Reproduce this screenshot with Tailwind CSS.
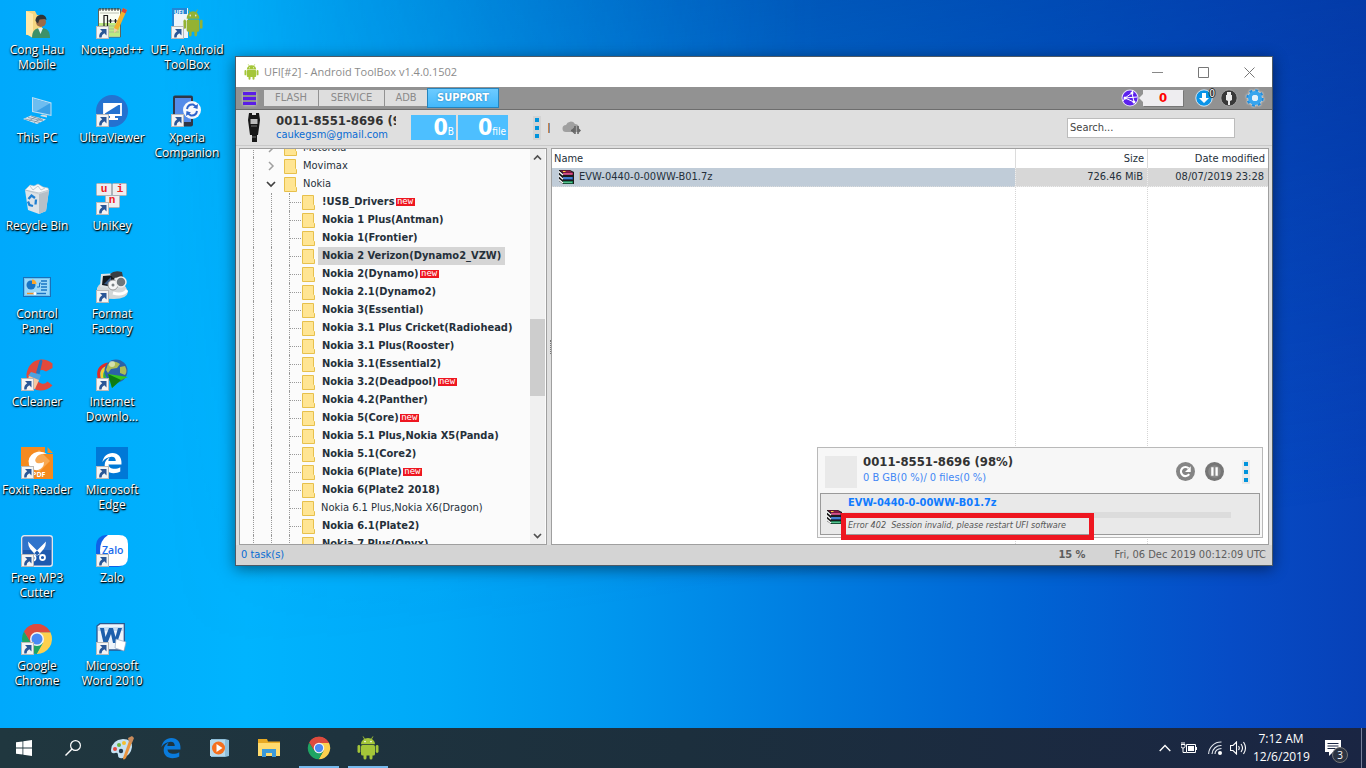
<!DOCTYPE html>
<html lang="en">
<head>
  <meta charset="UTF-8">
  <meta name="viewport" content="width=device-width, initial-scale=1.0">
  <title>UFI - Android ToolBox</title>
  <script src="https://cdn.jsdelivr.net/npm/@tailwindcss/browser@4"></script>
</head>
<body class="flex h-dvh flex-col overflow-hidden font-['Open_Sans','Noto_Sans',sans-serif] text-xs">

  <!-- shared symbols -->
  <svg class="hidden">
    <symbol id="shortcut" viewBox="0 0 32 32">
      <rect x=".5" y="19.500" width="12" height="12" fill="#f4f4f4" stroke="#b9b9b9"/>
      <path d="M4 22h6.500v6.500l-2.200-2.200Q5.600 27.500 5.500 30.500H3.200Q2.800 26.200 6.200 24.200z" fill="#2b5797"/>
    </symbol>
    <symbol id="android" viewBox="0 0 22 24">
      <g fill="#a4c639">
        <path d="M4 8.300a7 6.300 0 0 1 14 0z"/>
        <rect x="4" y="9" width="14" height="10.500" rx="1.500"/>
        <rect x="0.500" y="9" width="2.800" height="8" rx="1.400"/>
        <rect x="18.700" y="9" width="2.800" height="8" rx="1.400"/>
        <rect x="6.500" y="17" width="3" height="6.500" rx="1.500"/>
        <rect x="12.500" y="17" width="3" height="6.500" rx="1.500"/>
      </g>
      <path d="M7.800 3.500 6.300.8M14.200 3.500 15.700.8" stroke="#a4c639" stroke-width=".9" stroke-linecap="round"/>
      <circle cx="8" cy="5.600" r=".8" fill="#fff"/><circle cx="14" cy="5.600" r=".8" fill="#fff"/>
    </symbol>
    <symbol id="chrome" viewBox="0 0 32 32">
      <path d="M16 16 3 8.500A15 15 0 0 1 29 8.500L29.500 9.300H16z" fill="#dd4b3e"/>
      <path d="M16 9.300h13.400A15 15 0 0 1 15.600 31L22 19.500z" fill="#fdd04e"/>
      <path d="M3 8.500A15 15 0 0 0 15.600 31l6.300-11L16 16l-6 3.500z" fill="#1fa463"/>
      <path d="M3 8.500 10 20 10.500 12 16 9.300H29.400L28.800 8.200A15 15 0 0 0 3 8.500z" fill="#dd4b3e"/>
      <circle cx="16" cy="16" r="7" fill="#f5f5f5"/><circle cx="16" cy="16" r="5.500" fill="#4a8af4"/>
    </symbol>
    <symbol id="edge" viewBox="0 0 24 24">
      <path d="M1.500 11C2.500 5 6.800 1 12.400 1 19 1 22.300 5.800 22.300 11v2.700H8.200c.3 3.300 3 4.700 6.300 4.700 2.500 0 4.700-.7 6.500-1.800v4.800c-2.100 1.100-4.500 1.700-7.400 1.700C7.800 23.100 4 19.700 4 14.200c0-4 2.300-6.800 5.500-8.300-1 1.300-1.400 2.600-1.500 4h8.100c0-3-1.500-4.600-4.500-4.600C7.500 5.300 3.800 7.600 1.500 11z"/>
    </symbol>
    <symbol id="archive" viewBox="0 0 17 16">
      <path d="M1 1h11l4 2v12H5L1 12z" fill="#1c1c1c"/>
      <path d="M2 1.500h9.500l3 2H5z" fill="#8d1747"/><path d="M5 3.800h10v2H5.500z" fill="#c12a6a"/><path d="M5 5h9" stroke="#ff8fc0" stroke-width=".7"/>
      <path d="M5 8h10v2.500H5.500z" fill="#1f55b5"/><path d="M5 9h9" stroke="#7dc3ff" stroke-width=".8"/>
      <path d="M5 12.300h10v2.200H5.500z" fill="#12905b"/><path d="M5 13.300h9" stroke="#82e0ad" stroke-width=".8"/>
      <path d="M.8 2.500 5 6M.8 6.500l4.200 3.700M.8 10.500 5 14" stroke="#fff" stroke-width="1.300"/>
      <path d="M5 2.500h2.500" stroke="#ffd43c"/>
    </symbol>
  </svg>

  <main class="relative min-h-0 flex-1 bg-[linear-gradient(90deg,#00a9fc_0%,#00b4fe_18%,#00a9f8_32%,#0096ee_45%,#007ce0_60%,#0064d4_75%,#064cc6_90%,#0741b8_100%)]">
    <div class="absolute inset-0 bg-[linear-gradient(172deg,#00339499_0%,#00339400_75%)] [mask-image:linear-gradient(90deg,transparent_12%,black_60%)]"></div>

    <!-- desktop icons -->
    <nav class="absolute top-[7px] left-0 grid grid-flow-col auto-cols-[75px] grid-rows-[repeat(8,88px)] text-center leading-[15px] text-white [text-shadow:0_1px_2px_#000,1px_1px_1px_#000]">
      <a href="#" class="block pr-px"><svg class="mb-[3px] ml-[21px] size-8" viewBox="0 0 32 32"><path d="M5 4h9l2 4h5v20H5z" fill="#f5d680"/><path d="M5 4l7 3v24l-7-4z" fill="#ffe9a8"/><circle cx="20" cy="15" r="5" fill="#9c6b48"/><path d="M14.500 14c0-8 11-8 11-1l-2-1-5 .5-1.500 4z" fill="#2f3437"/><path d="M11 31c0-8 4-10 9-10s9 2 9 10z" fill="#3d9169"/><path d="M17 21h5l-2.500 6z" fill="#e9f3ef"/></svg>Cong Hau Mobile</a>
      <a href="#" class="block pr-px"><svg class="mb-[3px] ml-[21px] size-8" viewBox="0 0 32 32"><path d="M11 2 30.500 7.500V21L11 17z" fill="#bde0f4"/><path d="M12 3.500 29.500 8.500V19.700L12 16z" fill="#3aa0e6"/><path d="m12 3.500 17 4.800-14 8.300-3-.6z" fill="#6dbdf0"/><path d="m21 19.500 5 1v2l-7-1.500z" fill="#d6dce2"/><path d="M2 24 10 20.500l15 4-9 4.500z" fill="#dbe4ea"/><path d="m4 24 15 3.500M7 22.500 22 26M10 21l12 4M8 26l7-4.500M13 27.500l7-4" stroke="#6d8799" stroke-width=".7"/></svg>This PC</a>
      <a href="#" class="block pr-px"><svg class="mb-[3px] ml-[21px] size-8" viewBox="0 0 32 32"><path d="M4 7 28 7 25 28 18 31 7 27z" fill="#dce3e8"/><path d="m18 10 10-3-3 21-7 3z" fill="#b6c0c8"/><path d="M4 7 9 2l4 1 4-2 5 3 5 1 1 3-10 3z" fill="#f6f8f9" stroke="#b5c0c8" stroke-width=".6"/><path d="m9 3 3 4 5-4 3 4 4-2M4 7l14 3 10-3" stroke="#aab6bf" stroke-width=".7" fill="none"/><path d="m7.500 16 3-3.500 3.500 2.500M7 18.500l1.500 3.500 3.500 1M15 16.500l-.5 5" stroke="#1f7fd1" stroke-width="2.300" fill="none"/></svg>Recycle Bin</a>
      <a href="#" class="block pr-px"><svg class="mb-[3px] ml-[21px] size-8" viewBox="0 0 32 32"><rect x="2.500" y="6.500" width="27" height="19" fill="#6fc3f1" stroke="#1b70b8"/><rect x="4" y="8" width="24" height="16" fill="#9cd8f8"/><circle cx="10" cy="14" r="4.500" fill="#1975c5"/><path d="M11 13V8.500a4.500 4.500 0 0 1 4.500 4.500z" fill="#ffa629"/><path d="M16 16h2.500v-4H20" stroke="#1975c5" fill="none"/><path d="M20 10h6M20 13h6M20 16h6M20 19h6" stroke="#1975c5" stroke-width="1.600"/><path d="M6 22.500h7" stroke="#f29021" stroke-width="1.400"/><path d="M15 22.500h10" stroke="#1975c5" stroke-width="1.400"/><circle cx="14" cy="22.500" r="1.500" fill="#fff"/></svg>Control Panel</a>
      <a href="#" class="block pr-px"><svg class="mb-[3px] ml-[21px] size-8" viewBox="0 0 32 32"><path d="M31.500 9 25 12.500q-7-4-9.500 3-1 7 5 9 3.500 1 6-2l5 4q-7 6.500-16 4.500Q5 27 5.500 15 8 1.500 20 .5q6-.5 11.500 4z" fill="#e2493b"/><path d="M15 14 18.500 2q1.500-2.500 3 0l-3 13z" fill="#2873ba"/><path d="m10 13 10 3-2 5-11-4z" fill="#4da3e0"/><path d="m8 17 10 4-4 9-9-3z" fill="#f6c9a2"/><use href="#shortcut"/></svg>CCleaner</a>
      <a href="#" class="block pr-px whitespace-nowrap"><svg class="mb-[3px] ml-[21px] size-8" viewBox="0 0 32 32"><path d="M0 0h24v7h8v25H0z" fill="#f58a1f"/><path d="M26.500 0 32 6h-5.500z" fill="#f58a1f"/><path d="m18 3 11 11-11 11L7 14z" fill="#f9a953"/><path d="M26 7Q20 3 13 6 6 10 8 18q3 6 9 5 6-2 6-8-4 2-7 1-3-2-1-5 3-5 11-4z" fill="#fff"/><text x="11" y="30" font-size="7" font-weight="700" fill="#fff" style="text-shadow:none">PDF</text><use href="#shortcut"/></svg>Foxit Reader</a>
      <a href="#" class="block pr-px"><svg class="mb-[3px] ml-[21px] size-8" viewBox="0 0 32 32"><rect x=".7" y=".7" width="30.600" height="30.600" rx="2.500" fill="#1d59ae" stroke="#dfe6ee" stroke-width="1.400"/><path d="M2 2h28v13H2z" fill="#2f74cc"/><path d="M7 6.500 19.500 19l-3 1.500Q7 15 7 6.500zM25 6.500 12.500 19l3 1.500Q25 15 25 6.500z" fill="#fff"/><circle cx="12" cy="23" r="2.500" fill="none" stroke="#fff" stroke-width="1.800"/><circle cx="21.500" cy="22.500" r="2.500" fill="none" stroke="#fff" stroke-width="1.800"/><use href="#shortcut"/></svg>Free MP3 Cutter</a>
      <a href="#" class="block pr-px"><svg class="mb-[3px] ml-[21px] size-8" viewBox="0 0 32 32"><use href="#chrome"/><use href="#shortcut"/></svg>Google Chrome</a>

      <a href="#" class="block pr-px whitespace-nowrap"><svg class="mb-[3px] ml-[21px] size-8" viewBox="0 0 32 32"><path d="M2.500 2h22v28h-22z" fill="#fbfff4" stroke="#5e645a"/><path d="M3 16h21v13.500H3z" fill="#bdea83"/><path d="M4 6h19M4 19h19M4 22h19M4 25h19" stroke="#a1a89a" stroke-width=".7"/><path d="M4 1v3M7 1v3M10 1v3M13 1v3M16 1v3M19 1v3M22 1v3" stroke="#333"/><path d="M8 19V8.500h3.500V19M12.500 14h4M14.500 12v4M17.500 14h4M19.500 12v4" stroke="#1d1d1d" stroke-width="1.200" fill="none"/><path d="m27 1 4 2-9 20-4 3v-5z" fill="#f1b22e"/><path d="m27 1 4 2-1.500 3.500-4-2z" fill="#d8473b"/><path d="m18 21 4 2-4 3z" fill="#e9cfa6"/><use href="#shortcut"/></svg>Notepad++</a>
      <a href="#" class="block pr-px"><svg class="mb-[3px] ml-[21px] size-8" viewBox="0 0 32 32"><circle cx="16" cy="16" r="16" fill="#2472d0"/><path d="M8 9h17v11H8z" fill="#2472d0" stroke="#fff" stroke-width="1.800"/><path d="M8 19 24 9H8z" fill="#fff"/><path d="M14 20h5v3h3v2H11v-2h3z" fill="#fff"/><use href="#shortcut"/></svg>UltraViewer</a>
      <a href="#" class="block pr-px"><svg class="mb-[3px] ml-[21px] size-8" viewBox="0 0 32 32"><g fill="#eeeef0" stroke="#aeb2b8"><rect x=".5" y=".5" width="15" height="12" rx="1"/><rect x="16.500" y=".5" width="14" height="12" rx="1"/><rect x="9.500" y="12.500" width="14" height="12" rx="1"/></g><g font-family="Liberation Mono" font-weight="700" font-size="11" text-anchor="middle" fill="#ed2024" style="text-shadow:none"><text x="8" y="9">u</text><text x="24" y="9">i</text><text x="16" y="20">n</text></g><use href="#shortcut"/></svg>UniKey</a>
      <a href="#" class="block pr-px"><svg class="mb-[3px] ml-[21px] size-8" viewBox="0 0 32 32"><path d="M1 17q3-7 15-8 13 1 16 12-1 7-14 7-14 0-17-5z" fill="#d3d7d8"/><path d="m5 3 20-1-3 16-18-2z" fill="#dde3e6"/><path d="m7 5 12-1-2 12-11-2z" fill="#12181e"/><path d="m8 13 7-7v8z" fill="#395b88"/><path d="M14 3q4-4 12-2l1 5-10 1z" fill="#3a3e42"/><circle cx="17" cy="14" r="5" fill="#f5f6f6" stroke="#999"/><circle cx="25" cy="11" r="5" fill="#6f777b" stroke="#eceeee" stroke-width="1.500"/><circle cx="17" cy="14" r="1.500" fill="#7e8486"/><path d="M17 22q10 3 14-3" stroke="#fff" stroke-width="3" fill="none"/><use href="#shortcut"/></svg>Format Factory</a>
      <a href="#" class="block pr-px"><svg class="mb-[3px] ml-[21px] size-8" viewBox="0 0 32 32"><path d="M4 22Q-1 8 12 5" stroke="#e22d24" stroke-width="3" fill="none"/><path d="M7 21Q3 10 13 8" stroke="#f7cf2e" stroke-width="3" fill="none"/><path d="M9 21q-2-8 5-11" stroke="#36ae3a" stroke-width="2.500" fill="none"/><circle cx="20" cy="12" r="11.500" fill="#2c62a8"/><path d="M12 5q6-5 12 0l-3 4-6 1-3 4-2-3zM24 8l5-1q3 6 0 9l-5-2z" fill="#aebc56"/><circle cx="16" cy="5" r="3" fill="#e7efd0" opacity=".7"/><path d="m12 15 20 3-7 3-9 8z" fill="#35c81d"/><path d="m12 15 13 6-9 8z" fill="#0d7b14"/><use href="#shortcut"/></svg>Internet Downlo...</a>
      <a href="#" class="block pr-px"><svg class="mb-[3px] ml-[21px] size-8" viewBox="0 0 32 32"><path d="M0 0h32v32H0z" fill="#0078d7"/><svg x="5" y="5" width="22" height="22" fill="#fff"><use href="#edge"/></svg><use href="#shortcut"/></svg>Microsoft Edge</a>
      <a href="#" class="block pr-px"><svg class="mb-[3px] ml-[21px] size-8" viewBox="0 0 32 32"><rect width="32" height="32" rx="10" fill="#0f62e8"/><path d="M12 0h11q9 0 9 9v13q0 9-9 9H12q-8-4-8-15T12 0z" fill="#fff"/><text x="6" y="19" font-size="10.500" font-weight="600" fill="#1769ed" style="text-shadow:none">Zalo</text><use href="#shortcut"/></svg>Zalo</a>
      <a href="#" class="block pr-px"><svg class="mb-[3px] ml-[21px] size-8" viewBox="0 0 32 32"><path d="M1 3 4 .7h24.300V27H1z" fill="#edf4fc" stroke="#2c578f" stroke-width="1.300"/><path d="M2 4h25v4H2z" fill="#c7ddf4"/><path d="m4 5 3.500 15h4L15 11l2 9h4L26 5h-4l-2.500 9L17 5h-4L9.500 14 8 5z" fill="#1d5fac"/><path d="m20 16 10 3-2 9-9-3z" fill="#fff" stroke="#90a7c4" stroke-width=".7"/><use href="#shortcut"/></svg>Microsoft Word 2010</a>

      <a href="#" class="block pr-px"><svg class="mb-[3px] ml-[21px] size-8" viewBox="0 0 32 32"><path d="M1 1h16v30H1z" fill="#eef4fb"/><path d="M1 1h15v6H1z" fill="#2386d5"/><path d="M1 7h2v24H1z" fill="#2386d5"/><text x="3" y="6.500" font-size="6" font-weight="700" fill="#fff" style="text-shadow:none">UFI</text><svg x="12" y="2" width="20" height="28" viewBox="0 0 22 24" preserveAspectRatio="none" class="brightness-90"><use href="#android"/></svg><use href="#shortcut"/></svg>UFI - Android ToolBox</a>
      <a href="#" class="block pr-px"><svg class="mb-[3px] ml-[21px] size-8" viewBox="0 0 32 32"><rect x="2" y=".5" width="20" height="31" rx="2" fill="#303746"/><rect x="4" y="3" width="16" height="24" fill="#548be9"/><circle cx="21" cy="15" r="9" fill="#f6f8fc"/><path d="M16 14q1-5 6-4.500l3 2M26 16q-1 5-6 4.500l-3-2" stroke="#2e64cc" stroke-width="2" fill="none"/><path d="m27 9-.5 5-4.500-1.500zM15 21l.5-5 4.500 1.500z" fill="#2e64cc"/><use href="#shortcut"/></svg>Xperia Companion</a>
    </nav>

    <!-- ToolBox window -->
    <section class="absolute top-14 right-[93px] bottom-[162px] left-[235px] flex flex-col border border-[#4d5a66] bg-[#dfdfdf] font-['DejaVu_Sans_Condensed','DejaVu_Sans',sans-serif] text-[11px] leading-[14px] text-[#25303a] shadow-[0_3px_14px_#0007]">
      <header class="flex h-[30px] shrink-0 items-center bg-white pl-2">
        <svg class="h-4 w-[15px]"><use href="#android"/></svg>
        <h1 class="ml-[5px] flex-1 font-['Open_Sans',sans-serif] text-[11px] text-[#8b8b8b]">UFI[#2] - Android ToolBox v1.4.0.1502</h1>
        <button aria-label="Minimize" class="grid h-full w-[46px] place-items-center"><svg class="size-[11px]" viewBox="0 0 11 11"><path d="M0 5.500h11" stroke="#888"/></svg></button>
        <button aria-label="Maximize" class="grid h-full w-[46px] place-items-center"><svg class="size-[11px]" viewBox="0 0 11 11"><path d="M.5.5h10v10H.5z" stroke="#777" fill="none"/></svg></button>
        <button aria-label="Close" class="grid h-full w-[46px] place-items-center"><svg class="size-[11px]" viewBox="0 0 11 11"><path d="m.5.500 10 10m0-10-10 10" stroke="#777"/></svg></button>
      </header>

      <nav class="flex h-[23px] shrink-0 items-center border-b border-[#6d6d6d] bg-[#929292] px-[7px]">
        <button aria-label="Menu" class="mr-2 flex h-[13px] w-[13px] flex-col justify-between shadow-[0_0_3px_#ddd]"><span class="h-[3px] w-full bg-[#5a1de6]"></span><span class="h-[3px] w-full bg-[#5a1de6]"></span><span class="h-[3px] w-full bg-[#5a1de6]"></span></button>
        <button class="h-4 w-[54px] bg-[#dedede] text-[#8a8a8a]">FLASH</button>
        <button class="ml-px h-4 w-[65px] bg-[#dedede] text-[#8a8a8a]">SERVICE</button>
        <button class="ml-px h-4 w-[42px] bg-[#dedede] text-[#8a8a8a]">ADB</button>
        <button class="h-5 w-[72px] border border-[#2584bd] bg-linear-to-b from-[#6dcbff] to-[#42b8fb] font-bold text-white [text-shadow:0_0_2px_#1b78b0]">SUPPORT</button>
        <div class="ml-auto flex items-center">
          <svg class="size-[18px]" viewBox="0 0 18 18"><circle cx="9" cy="9" r="8.500" fill="#e7e0fa"/><circle cx="9" cy="9" r="7.500" fill="#5c20ee"/><path d="m4 9 7-5 2 9zM4 9l12-1M4 9l-2 3m9-8 1-3m1 12 2 2" stroke="#fff" fill="none"/><circle cx="4" cy="9" r="1.500" fill="#fff"/><circle cx="11" cy="4" r="1.500" fill="#fff"/><circle cx="13" cy="13" r="1.500" fill="#fff"/></svg>
          <span class="border-4 border-l-0 border-transparent border-r-[#eeedf0]"></span>
          <output class="mr-3 h-4 w-10 bg-[#eeedf0] text-center text-[13px] leading-4 font-bold text-[#f00] shadow-[1px_1px_0_#777]">0</output>
          <button aria-label="Downloads" class="relative size-[18px]"><svg class="size-[18px]" viewBox="0 0 18 18"><circle cx="9" cy="9" r="8.200" fill="#0a94e8" stroke="#d7e4ee"/><path d="M7 4h4v5h3l-5 5-5-5h3z" fill="#fff"/></svg><span class="absolute top-0 right-[-2px] text-[10px] leading-[10px] text-white [text-shadow:1px_0_0_#222,-1px_0_0_#222,0_1px_0_#222,0_-1px_0_#222]">0</span></button>
          <button aria-label="Device" class="ml-[7px] size-[18px]"><svg class="size-[18px]" viewBox="0 0 18 18"><circle cx="9" cy="9" r="8.200" fill="#383838" stroke="#a5a5a5"/><path d="M7 3h4v3h1v5l-2 1v4H8v-4l-2-1V6h1z" fill="#ececec"/></svg></button>
          <button aria-label="Settings" class="ml-[7px] size-5"><svg class="size-5 drop-shadow-[0_0_1px_#fff]" viewBox="0 0 20 20"><circle cx="10" cy="10" r="7" fill="none" stroke="#238ddb" stroke-width="3.500" stroke-dasharray="2.750 2.750"/><circle cx="10" cy="10" r="5" fill="none" stroke="#38a5ee" stroke-width="4"/><circle cx="10" cy="10" r="3" fill="#e4f1fb"/></svg></button>
        </div>
      </nav>

      <div class="flex h-9 shrink-0 items-center border-b border-[#c9c9c9] pr-[37px] pl-3">
        <svg class="h-[29px] w-3" viewBox="0 0 12 29"><path d="M1 0h3v2h4V0h3l1 7-2 15H9v7H4v-7H2L0 7z" fill="#171717"/><path d="M2.500 6h7v5h-7z" fill="#bbb"/><path d="M3 13h6M4 24h4" stroke="#777"/></svg>
        <div class="ml-4 w-[120px] overflow-hidden whitespace-nowrap">
          <p class="text-[13px] leading-[15px] font-bold text-[#333]">0011-8551-8696 (98%)</p>
          <a href="#" class="block text-[#086bd3]">caukegsm@gmail.com</a>
        </div>
        <p class="ml-[15px] flex h-[25px] w-[45px] items-baseline justify-end bg-[#4dbfff] pr-0.5 leading-[25px] text-white"><b class="text-[23px]">0</b><span class="text-[10px]">B</span></p>
        <p class="ml-0.5 flex h-[25px] w-[50px] items-baseline justify-end bg-[#4dbfff] pr-0.5 leading-[25px] text-white"><b class="text-[23px]">0</b><span class="text-[10px]">file</span></p>
        <button aria-label="More" class="ml-[25px] flex h-6 w-2 flex-col items-center justify-between bg-[#d3d3d3] py-0.5"><i class="size-1 bg-[#0093dc]"></i><i class="size-1 bg-[#0093dc]"></i><i class="size-1 bg-[#0093dc]"></i></button>
        <i class="ml-[7px] h-2.5 w-0.5 border-r border-[#7a8fae] bg-[#c98246]"></i>
        <svg class="ml-3 h-4 w-5" viewBox="0 0 20 16"><path d="M4 12a3.500 3.500 0 0 1 0-7A5 5 0 0 1 13 4q3 0 4 3v5z" fill="#a0a0a0"/><path d="M9 10.500h3M13 6v8M16 6v8" stroke="#555" stroke-width="1.300"/><path d="M12.500 7 9 10.500l3.500 3.500zM16.500 8 19 10.500 16.500 13z" fill="#666"/></svg>
        <input type="text" aria-label="Search" placeholder="Search..." class="ml-auto h-5 w-[168px] border border-[#bcbcbc] bg-white px-0.5 placeholder:text-[#444]">
      </div>

      <div class="flex min-h-0 flex-1 px-[3px] pt-0.5">
        <!-- folder tree -->
        <div class="flex w-[308px] shrink-0 border border-[#9f9f9f] bg-[#fbfbfb]">
          <div class="min-w-0 flex-1 overflow-hidden">
            <ul id="tree" class="-mt-2.5 pl-[13px] whitespace-nowrap"></ul>
          </div>
          <div class="mr-px flex w-[15px] flex-col items-center bg-[#f0f0f0] py-1">
            <svg class="size-[9px]" viewBox="0 0 9 9"><path d="M1 6.500 4.500 3 8 6.500" stroke="#505050" stroke-width="1.700" fill="none"/></svg>
            <span class="mt-[157px] h-[77px] w-full bg-[#cdcdcd]"></span>
            <svg class="mt-auto size-[9px]" viewBox="0 0 9 9"><path d="M1 3 4.500 6.500 8 3" stroke="#505050" stroke-width="1.700" fill="none"/></svg>
          </div>
        </div>
        <div class="flex w-1 shrink-0 items-center justify-end"><span class="h-3.5 border-l border-dotted border-[#777]"></span></div>

        <!-- file list -->
        <div class="relative min-w-0 flex-1 border border-[#9f9f9f] bg-white">
          <table class="h-full w-full table-fixed border-separate border-spacing-0">
            <thead>
              <tr class="h-[19px]">
                <th class="px-0.5 text-left font-normal">Name</th>
                <th class="w-[132px] border-l border-[#dcdcdc] px-[3px] text-right font-normal">Size</th>
                <th class="w-[121px] border-l border-[#dcdcdc] px-[3px] text-right font-normal">Date modified</th>
              </tr>
            </thead>
            <tbody>
              <tr class="h-[19px] bg-[#d7d7d7]">
                <td class="border-b border-dotted border-[#ddd] bg-[#c0ccd8] pl-1.5"><span class="flex items-center"><svg class="mr-1 h-4 w-[17px]"><use href="#archive"/></svg>EVW-0440-0-00WW-B01.7z</span></td>
                <td class="border-b border-l border-dotted border-[#eee] px-1 text-right">726.46 MiB</td>
                <td class="border-b border-l border-dotted border-[#eee] px-1 text-right">08/07/2019 23:28</td>
              </tr>
              <tr>
                <td></td>
                <td class="border-l border-dotted border-[#d5d5d5]"></td>
                <td class="border-l border-dotted border-[#d5d5d5]"></td>
              </tr>
            </tbody>
          </table>

          <!-- download panel -->
          <aside class="absolute right-[5px] bottom-1.5 w-[446px] border border-[#b9b9b9] bg-[#f7f7f7] p-0.5">
            <div class="flex h-[43px] items-center pr-2.5 pl-[5px]">
              <span class="size-8 bg-[#e9e9e9]"></span>
              <div class="ml-1.5 flex-1 pb-1">
                <p class="text-[13px] leading-4 font-bold text-[#333]">0011-8551-8696 (98%)</p>
                <p class="leading-4 text-[#4387f5]">0 B GB(0 %)/ 0 files(0 %)</p>
              </div>
              <button aria-label="Retry"><svg class="size-[19px]" viewBox="0 0 18 18"><circle cx="9" cy="9" r="9" fill="#858585"/><path d="M12.500 11.500A4.300 4.300 0 1 1 12 6" stroke="#fff" stroke-width="2" fill="none"/><path d="M14 4v5.500H8.500z" fill="#fff"/></svg></button>
              <button aria-label="Pause" class="ml-2.5"><svg class="size-[19px]" viewBox="0 0 18 18"><circle cx="9" cy="9" r="9" fill="#767676"/><circle cx="9" cy="9" r="6" fill="#8a8a8a"/><path d="M7 5v8m4-8v8" stroke="#fff" stroke-width="2.200"/></svg></button>
              <button aria-label="More" class="ml-[18px] flex h-6 w-2 flex-col items-center justify-between bg-[#e9e9e9] py-0.5"><i class="size-1 bg-[#0093dc]"></i><i class="size-1 bg-[#0093dc]"></i><i class="size-1 bg-[#0093dc]"></i></button>
            </div>
            <div class="relative flex h-[42px] items-center border border-[#9a9a9a] bg-[#e9e9e9] pr-7 pl-[5px]">
              <svg class="mt-1.5 h-4 w-[17px] shrink-0"><use href="#archive"/></svg>
              <div class="ml-px flex-1">
                <p class="ml-1 h-4 font-bold text-[#107bff]">EVW-0440-0-00WW-B01.7z</p>
                <div class="h-1.5 bg-[#dcdcdc]"></div>
                <p class="ml-1 text-[9px] text-[#555] italic">Error 402&nbsp; Session invalid, please restart UFI software</p>
              </div>
              <span class="absolute top-[19px] left-5 h-[27px] w-[253px] border-5 border-[#ee1620]"></span>
            </div>
          </aside>
        </div>
      </div>

      <footer class="flex h-5 shrink-0 items-center bg-[#d4d4d4] pr-1.5 pl-[5px] text-[#5d5d5d]">
        <span class="flex-1 text-[#086bd3]">0 task(s)</span>
        <b class="mr-[29px]">15 %</b>
        <span>Fri, 06 Dec 2019 00:12:09 UTC</span>
      </footer>
    </section>
  </main>

  <!-- taskbar -->
  <footer class="flex h-10 shrink-0 bg-linear-to-r from-[#20373f] via-[#1c2f3d] to-[#1a2543] text-white">
    <div class="flex gap-px">
      <button aria-label="Start" class="grid w-12 place-items-center"><svg class="size-4" viewBox="0 0 16 16"><path d="M0 2.300 6.500 1.400v6.200H0zM7.300 1.300 16 0v7.600H7.300zM0 8.400h6.500v6.200L0 13.700zM7.300 8.400H16V16l-8.700-1.300z" fill="#fff"/></svg></button>
      <button aria-label="Search" class="grid w-12 place-items-center"><svg class="size-4" viewBox="0 0 16 16"><circle cx="10.500" cy="5.500" r="4.900" stroke="#fff" stroke-width="1.200" fill="none"/><path d="M7 9 .5 15.500" stroke="#fff" stroke-width="1.400"/></svg></button>
      <button aria-label="Paint" class="grid w-12 place-items-center"><svg class="size-6" viewBox="0 0 24 24"><path d="M1 14Q2 4 13 3q9 0 9 8-1 8-9 11-5 1-5-3 0-3-3-2-4 1-4-3z" fill="#c6e1f2"/><circle cx="5" cy="13" r="2" fill="#e34a3f"/><circle cx="9" cy="9" r="2" fill="#6ab541"/><circle cx="14" cy="7" r="2" fill="#f5bf2e"/><circle cx="11" cy="15" r="2.200" fill="#23384b"/><path d="m19 5 3 1-6 16q-3 3-3 0z" fill="#e99440"/><path d="m18 2 4-2 2 2-2 5-3-1z" fill="#c98b5c"/></svg></button>
      <button aria-label="Edge" class="grid w-12 place-items-center"><svg class="size-[22px]" fill="#0a7bdc"><use href="#edge"/></svg></button>
      <button aria-label="Media Player" class="grid w-12 place-items-center"><svg class="size-5" viewBox="0 0 20 20"><path d="M1 1h14l4 1v16l-4 1H1z" fill="#8fbfdb"/><path d="M0 2h15v16H0z" fill="#b7d9eb"/><circle cx="8.500" cy="10" r="6.500" fill="#f5701f"/><path d="m6.500 6 6 4-6 4z" fill="#fff"/></svg></button>
      <button aria-label="File Explorer" class="grid w-12 place-items-center"><svg class="h-[18px] w-[22px]" viewBox="0 0 22 18"><path d="M0 0h9l1 2.500h12V17H0z" fill="#e8a922"/><path d="M0 4h22v13H0z" fill="#ffdb6e"/><path d="M4 10h14v8h-4v-4H8v4H4z" fill="#3b9ad9"/></svg></button>
      <button aria-label="Chrome" class="ml-px grid w-12 place-items-center bg-[linear-gradient(#76b9ed,#76b9ed)] bg-[size:40px_2px] bg-bottom bg-no-repeat"><svg class="size-6"><use href="#chrome"/></svg></button>
      <button aria-label="Android ToolBox" class="grid w-12 place-items-center bg-[linear-gradient(#76b9ed,#76b9ed)] bg-[size:40px_2px] bg-bottom bg-no-repeat"><svg class="h-6 w-[22px]"><use href="#android"/></svg></button>
    </div>
    <div class="ml-auto flex items-center">
      <svg class="h-2 w-3" viewBox="0 0 12 8"><path d="M.7 7 6 1.500 11.300 7" stroke="#fff" stroke-width="1.300" fill="none"/></svg>
      <svg class="ml-2.5 h-3 w-4" viewBox="0 0 16 12"><path d="M0 2.500h4v2Q4 6 2 6T0 4.500zM1 0v3M3 0v3M2 6v4.500h3" stroke="#fff" fill="none"/><path d="M5.500 2.500h9v8h-9z" stroke="#fff" fill="none"/><path d="M7 4h6v5H7zM15 5h1v3h-1z" fill="#fff"/></svg>
      <svg class="ml-[11px] size-3.5" viewBox="0 0 14 14"><path d="M.6 13A12.400 12.400 0 0 1 13.500 1M4 13A9 9 0 0 1 13.500 4.500M7 13q0-5 6.500-5.500" stroke="#e4e8ee" stroke-width="1.100" fill="none"/><circle cx="12" cy="12" r="2" fill="#fff"/></svg>
      <svg class="ml-2 h-3.5 w-[17px]" viewBox="0 0 17 14"><path d="M.5 4.500H3L6.500 1v12L3 9.500H.5zM8.500 5q1.500 2 0 4M11 3q3 4 0 8M13.500 1q4 6 0 12" stroke="#fff" stroke-width="1.100" fill="none"/></svg>
      <time class="ml-1.5 w-14 text-center leading-[18px]">7:12 AM<br>12/6/2019</time>
      <button aria-label="Notifications" class="relative ml-4 size-4"><svg class="size-4" viewBox="0 0 16 16"><path d="M0 0h16v12H8l-4 4v-4H0z" fill="#fff"/><path d="M2.500 3.500h11M2.500 6h11M2.500 8.500h8" stroke="#1a2745"/></svg><span class="absolute top-[7px] left-[7px] size-4 rounded-full border border-[#777] bg-[#2c3442] text-[10px] leading-[14px]">3</span></button>
      <span class="mr-1 ml-5 h-10 border-l border-[#77809a]"></span>
    </div>
  </footer>

  <script>
    const models = [
      ["!USB_Drivers", "new"], ["Nokia 1 Plus(Antman)"], ["Nokia 1(Frontier)"],
      ["Nokia 2 Verizon(Dynamo2_VZW)", "selected"], ["Nokia 2(Dynamo)", "new"],
      ["Nokia 2.1(Dynamo2)"], ["Nokia 3(Essential)"], ["Nokia 3.1 Plus Cricket(Radiohead)"],
      ["Nokia 3.1 Plus(Rooster)"], ["Nokia 3.1(Essential2)"], ["Nokia 3.2(Deadpool)", "new"],
      ["Nokia 4.2(Panther)"], ["Nokia 5(Core)", "new"], ["Nokia 5.1 Plus,Nokia X5(Panda)"],
      ["Nokia 5.1(Core2)"], ["Nokia 6(Plate)", "new"], ["Nokia 6(Plate2 2018)"],
      ["Nokia 6.1 Plus,Nokia X6(Dragon)", "read"], ["Nokia 6.1(Plate2)"], ["Nokia 7 Plus(Onyx)"],
    ]
    const folder = `<svg class="h-[15px] w-[13px] shrink-0" viewBox="0 0 13 15"><path d="M.5.5h11v9l1 1v4H.5z" fill="#ffe593" stroke="#e7c04b"/></svg>`
    const badge = `<span class="ml-px h-2 w-[19px] bg-[#ee1620] text-center font-['DejaVu_Sans_Mono',monospace] text-[9px] leading-[6px] text-white">new</span>`

    const brand = (name, open) => `
      <li class="flex h-[18px] items-center">
        <span class="h-full w-[13px] border-l border-dotted border-[#999]"></span>
        <svg class="mr-2 size-2.5" viewBox="0 0 10 10">${open
          ? `<path d="M1 3 5 7 9 3" stroke="#404040" stroke-width="1.700" fill="none"/>`
          : `<path d="M3 1 7 5 3 9" stroke="#a0a0a0" stroke-width="1.500" fill="none"/>`}</svg>
        ${folder}<span class="ml-1.5">${name}</span>
      </li>`

    const model = ([name, state]) => `
      <li class="flex h-[18px] items-center">
        <span class="h-full w-[18px] border-l border-dotted border-[#999]"></span>
        <span class="h-full w-[18px] border-l border-dotted border-[#999]"></span>
        <span class="mr-px flex h-full w-3 items-center border-l border-dotted border-[#999]"><i class="w-full border-t border-dotted border-[#999]"></i></span>
        ${folder}<span class="${state === "selected" ? "ml-[3px] h-full bg-[#d5d5d5] px-1 leading-[18px] font-bold" : state === "read" ? "ml-1.5" : "ml-[7px] font-bold"}">${name}</span>${state === "new" ? badge : ""}
      </li>`

    document.getElementById("tree").innerHTML =
      brand("Motorola") + brand("Movimax") + brand("Nokia", true) + models.map(model).join("")
  </script>
</body>
</html>
